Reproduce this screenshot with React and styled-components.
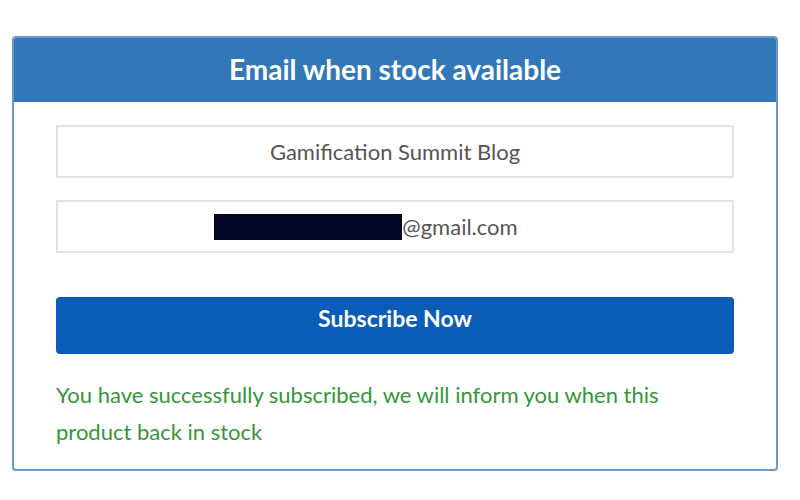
import styled, { createGlobalStyle } from 'styled-components';

const GlobalStyle = createGlobalStyle`
  html, body {
    margin: 0;
    padding: 0;
    background: #ffffff;
    font-family: Lato, "Open Sans", sans-serif;
  }
`;

function App() {
  return (
    <StyledPage>
      <GlobalStyle />
      <StyledCard>
        <StyledHeader>Email when stock available</StyledHeader>
        <StyledBody>
          <StyledField>Gamification Summit Blog</StyledField>
          <StyledField $shift={58}>
            <StyledRedacted />
            @gmail.com
          </StyledField>
          <StyledButton>Subscribe Now</StyledButton>
          <StyledMessage>
            You have successfully subscribed, we will inform you when this
            product back in stock
          </StyledMessage>
        </StyledBody>
      </StyledCard>
    </StyledPage>
  );
}

const StyledPage = styled.div`
  width: 800px;
  height: 500px;
  padding: 36px 0 0 12px;
  box-sizing: border-box;
`;

const StyledCard = styled.div`
  width: 766px;
  height: 435px;
  box-sizing: border-box;
  border: 2px solid #6c98c6;
  border-radius: 4px;
  overflow: hidden;
  display: flex;
  flex-direction: column;
`;

const StyledHeader = styled.div`
  height: 64px;
  background-color: #3278b8;
  color: #ffffff;
  font-size: 28px;
  font-weight: 700;
  display: flex;
  align-items: center;
  justify-content: center;
  flex-shrink: 0;
  padding-bottom: 2px;
  box-sizing: border-box;
`;

const StyledBody = styled.div`
  display: flex;
  flex-direction: column;
  padding: 23px 42px 0;
`;

const StyledField = styled.div`
  height: 53px;
  box-sizing: border-box;
  border: 2px solid #e2e2e2;
  display: flex;
  align-items: center;
  justify-content: center;
  padding-right: ${(p) => p.$shift || 0}px;
  font-size: 22px;
  color: #555555;
  margin-bottom: 22px;
`;

const StyledRedacted = styled.span`
  display: inline-block;
  width: 188px;
  height: 26px;
  background-color: #010624;
`;

const StyledButton = styled.div`
  margin-top: 22px;
  height: 57px;
  box-sizing: border-box;
  border-radius: 4px;
  background-color: #0a5cb6;
  color: #ffffff;
  font-size: 23px;
  font-weight: 700;
  display: flex;
  justify-content: center;
  padding-top: 7px;
`;

const StyledMessage = styled.p`
  margin: 22px 0 0;
  color: #36963a;
  font-size: 22px;
  line-height: 37px;
  padding-right: 40px;
`;

export default App;
